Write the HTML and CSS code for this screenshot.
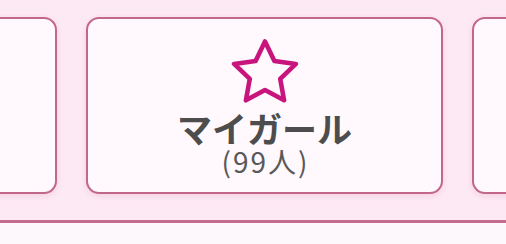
FILE: index.html
```html
<!DOCTYPE html>
<html lang="ja">
<head>
<meta charset="utf-8">
<link rel="stylesheet" href="styles.css">
</head>
<body>
<div class="panel">
  <div class="row">
    <div class="card"></div>
    <div class="card">
      <svg class="star" width="70" height="66" viewBox="0 0 70 66" aria-hidden="true">
        <polygon points="35,2.5 44.4,22.06 65.91,24.96 50.22,39.94 54.1,61.29 35,51 15.9,61.29 19.78,39.94 4.09,24.96 25.6,22.06" fill="none" stroke="#c8157e" stroke-width="4.6" stroke-linejoin="round"/>
      </svg>
      <div class="title">マイガール</div>
      <div class="count">(99人)</div>
    </div>
    <div class="card"></div>
  </div>
</div>
<div class="rest"></div>
</body>
</html>
```
FILE: styles.css
```css
html, body {
  margin: 0;
  padding: 0;
}
body {
  width: 506px;
  height: 244px;
  overflow: hidden;
  background: #fdf8fb;
  font-family: "Noto Sans CJK JP", "Noto Sans", sans-serif;
}
.panel {
  background: #fde9f4;
  padding-top: 17px;
  padding-bottom: 26px;
  border-bottom: 3px solid #c56b8e;
  overflow: hidden;
}
.row {
  display: flex;
  gap: 29px;
  margin-left: -300px;
}
.card {
  flex: 0 0 357px;
  height: 177px;
  box-sizing: border-box;
  border: 2px solid #c2678a;
  border-radius: 13px;
  background: #fff8fc;
  box-shadow: 0 2px 6px rgba(200, 100, 140, 0.18);
  display: flex;
  flex-direction: column;
  align-items: center;
  padding-top: 20px;
}
.star {
  display: block;
}
.title {
  font-size: 35px;
  font-weight: 700;
  color: #4d4d4d;
  line-height: 36px;
  margin-top: 5px;
}
.count {
  font-size: 28px;
  color: #595959;
  line-height: 30px;
  letter-spacing: 2px;
  margin-right: -2px;
}
```
